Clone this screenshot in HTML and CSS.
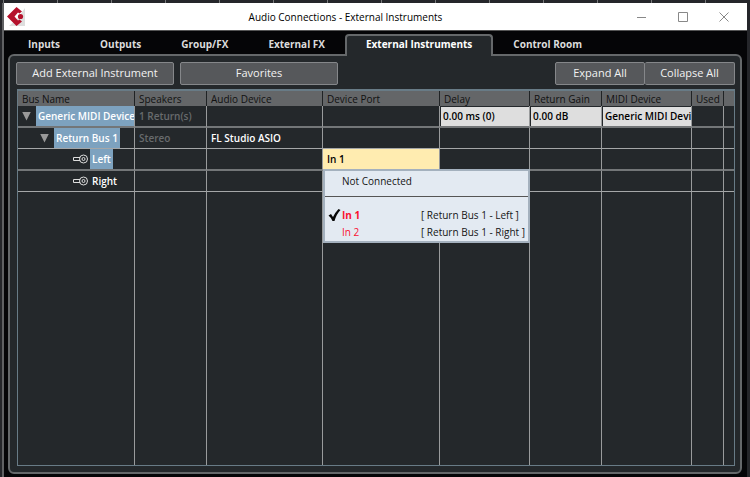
FILE: index.html
```html
<!DOCTYPE html>
<html lang="en">
<head>
  <meta charset="UTF-8" />
  <meta name="viewport" content="width=device-width, initial-scale=1.0" />
  <title>Audio Connections - External Instruments</title>
  <link rel="stylesheet" href="styles.css">
</head>
<body>
  <div class="window">
    <header class="titlebar">
      <svg class="logo" viewBox="0 0 19 19" aria-hidden="true">
        <path d="M18 1V19H2L10 12Z" fill="#dedede"/>
        <path d="M9.500 0L15 4.500L12.500 6.500L11 5.500L7.500 9.500L11 13.500L12.500 12.500L15 14.500L9.500 19L0 9.500Z" fill="#b5122c"/>
        <circle cx="13.500" cy="9.500" r="2.600" fill="#b5122c"/>
      </svg>
      <h1>Audio Connections - External Instruments</h1>
      <div class="window-buttons">
        <button aria-label="Minimize"><svg viewBox="0 0 10 10"><path d="M0 5.500H9"/></svg></button>
        <button aria-label="Maximize"><svg viewBox="0 0 10 10"><path d="M.5 .5H9.500V9.500H.5Z"/></svg></button>
        <button aria-label="Close"><svg viewBox="0 0 10 10"><path d="M.5 .5L9.500 9.500M9.500 .5L.5 9.500"/></svg></button>
      </div>
    </header>

    <nav class="tabs" role="tablist">
      <button class="tab" role="tab">Inputs</button>
      <button class="tab" role="tab">Outputs</button>
      <button class="tab" role="tab">Group/FX</button>
      <button class="tab" role="tab">External FX</button>
      <button class="tab active" role="tab" aria-selected="true">External Instruments</button>
      <button class="tab" role="tab">Control Room</button>
    </nav>

    <main class="panel">
      <div class="toolbar">
        <button class="button wide">Add External Instrument</button>
        <button class="button wide">Favorites</button>
        <div class="button-group">
          <button class="button">Expand All</button>
          <button class="button">Collapse All</button>
        </div>
      </div>

      <div class="bus-list">
        <table>
          <colgroup>
            <col class="col-bus"><col class="col-speakers"><col class="col-audio">
            <col class="col-port"><col class="col-delay"><col class="col-gain">
            <col class="col-midi"><col class="col-used"><col>
          </colgroup>
          <thead>
            <tr>
              <th>Bus Name</th><th>Speakers</th><th>Audio Device</th><th>Device Port</th>
              <th>Delay</th><th>Return Gain</th><th>MIDI Device</th><th>Used</th><th></th>
            </tr>
          </thead>
          <tbody>
            <tr>
              <td><div class="bus"><button class="arrow" aria-label="Collapse"></button><span class="name selected">Generic MIDI Device</span></div></td>
              <td class="dim">1 Return(s)</td><td></td><td></td>
              <td class="field"><input type="text" value="0.00 ms (0)" aria-label="Delay"></td>
              <td class="field"><input type="text" value="0.00 dB" aria-label="Return Gain"></td>
              <td class="field"><select aria-label="MIDI Device"><option>Generic MIDI Device</option></select></td>
              <td></td><td></td>
            </tr>
            <tr>
              <td><div class="bus level-1"><button class="arrow" aria-label="Collapse"></button><span class="name selected">Return Bus 1</span></div></td>
              <td class="dim">Stereo</td><td>FL Studio ASIO</td><td></td>
              <td></td><td></td><td></td><td></td><td></td>
            </tr>
            <tr>
              <td><div class="bus level-2">
                <svg class="plug" viewBox="0 0 15 10"><path d="M7 3.500H.5V6.500H7"/><circle cx="10.500" cy="5" r="4"/><circle cx="10.500" cy="5" r="1.500"/></svg>
                <span class="name selected">Left</span></div></td>
              <td></td><td></td>
              <td class="port">
                <button class="port-button" aria-haspopup="menu" aria-expanded="true">In 1</button>
                <div class="menu" role="menu">
                  <button class="menu-item" role="menuitem"><span>Not Connected</span></button>
                  <hr>
                  <button class="menu-item used checked" role="menuitem">
                    <svg class="check" viewBox="0 0 12 12"><path d="M0 6.500L2.500 5L4.500 8Q7 3 10 0L12 1Q8 5 6 12L4 12Q3 9 0 6.500Z"/></svg>
                    <span>In 1</span><span class="bus-ref">[ Return Bus 1 - Left ]</span>
                  </button>
                  <button class="menu-item used" role="menuitem"><span>In 2</span><span class="bus-ref">[ Return Bus 1 - Right ]</span></button>
                </div>
              </td>
              <td></td><td></td><td></td><td></td><td></td>
            </tr>
            <tr>
              <td><div class="bus level-2">
                <svg class="plug" viewBox="0 0 15 10"><path d="M7 3.500H.5V6.500H7"/><circle cx="10.500" cy="5" r="4"/><circle cx="10.500" cy="5" r="1.500"/></svg>
                <span class="name">Right</span></div></td>
              <td></td><td></td><td></td><td></td><td></td><td></td><td></td><td></td>
            </tr>
            <tr class="filler">
              <td></td><td></td><td></td><td></td><td></td><td></td><td></td><td></td><td></td>
            </tr>
          </tbody>
        </table>
      </div>
    </main>
  </div>
</body>
</html>
```

FILE: styles.css
```css
* {
  box-sizing: border-box;
}
body {
  margin: 0;
  height: 100vh;
  padding: 3px 3px 0 2px;
  background: repeating-linear-gradient(to right, #25262a 0 3px, #77787a 3px 4px, #25262a 4px 54px);
  font-family: "Open Sans", "Noto Sans", sans-serif;
  font-size: 10px;
  line-height: 16px;
}
button, input, select {
  margin: 0;
  padding: 0;
  border: none;
  background: none;
  color: inherit;
  font: inherit;
}
.window {
  height: 100%;
  display: flex;
  flex-direction: column;
  background: #050507;
  border-left: 2px solid #606163;
}

/* title bar */
.titlebar {
  height: 28px;
  flex: none;
  display: flex;
  align-items: center;
  padding: 0 3px;
  background: #fff;
  border-bottom: 1px solid #555;
}
.logo {
  width: 19px;
  height: 19px;
}
.titlebar h1 {
  flex: 1;
  margin: 0;
  padding-left: 44px;
  text-align: center;
  font-size: 10px;
  font-weight: 400;
  color: #000;
}
.window-buttons {
  display: flex;
}
.window-buttons button {
  width: 41px;
  height: 26px;
  display: flex;
  align-items: center;
  justify-content: center;
}
.window-buttons svg {
  width: 10px;
  height: 10px;
  fill: none;
  stroke: #888;
}

/* tabs */
.tabs {
  display: flex;
  flex: none;
  height: 22px;
  margin: 3px 5px -2px 4px;
  position: relative;
}
.tab {
  padding: 0 20px 2px;
  font-weight: 700;
  color: #dcdcdc;
}
.tab.active {
  padding: 0 19px 4px;
  background: #24282b;
  border: 2px solid #65686a;
  border-bottom: none;
  border-radius: 4px 4px 0 0;
  color: #fff;
}

/* panel */
.panel {
  flex: 1;
  min-height: 0;
  display: flex;
  flex-direction: column;
  margin: 0 5px 3px 4px;
  padding: 6px 5px 6px 6px;
  background: #24282b;
  border: 2px solid #65686a;
  border-radius: 6px;
}
.toolbar {
  display: flex;
  gap: 6px;
  margin-bottom: 4px;
}
.button {
  height: 23px;
  width: 90px;
  padding-bottom: 1px;
  background: #56585b;
  border: 1px solid #85878a;
  border-radius: 2px;
  font-size: 11px;
  color: #f2f2f2;
}
.button.wide {
  width: 158px;
}
.button-group {
  display: flex;
  margin-left: auto;
}
.button-group .button + .button {
  border-left: none;
}

/* bus list */
.bus-list {
  flex: 1;
  min-height: 0;
  display: flex;
  margin-left: 1px;
  border: 1px solid #687b86;
  border-top-width: 2px;
}
table {
  width: 100%;
  table-layout: fixed;
  border-collapse: separate;
  border-spacing: 0;
}
.col-bus, .col-port { width: 117px; }
.col-audio { width: 116px; }
.col-speakers, .col-gain { width: 72px; }
.col-delay, .col-midi { width: 90px; }
.col-used { width: 32px; }
th {
  height: 15px;
  padding: 0 4px;
  background: #646668;
  border-right: 1px solid #202325;
  text-align: left;
  line-height: 14px;
  font-weight: 400;
  color: #111;
  white-space: nowrap;
}
td {
  height: 21px;
  padding: 0 4px;
  border-right: 1px solid #999b9c;
  border-bottom: 1px solid #a5a7a8;
  font-weight: 600;
  color: #fff;
  white-space: nowrap;
}
tr:nth-child(odd) td {
  height: 22px;
  border-bottom: 2px solid #737678;
}
th:last-child, td:last-child {
  border-right: none;
}
tbody .filler td {
  height: auto;
  border-bottom: none;
}
td.dim {
  color: #686b6d;
}
td:first-child {
  padding: 0;
  overflow: hidden;
}
.bus {
  display: flex;
  align-items: center;
  height: 20px;
  padding-left: 4px;
}
.level-1 { padding-left: 22px; }
.level-2 { padding-left: 55px; }
.arrow {
  width: 9px;
  height: 9px;
  margin-right: 5px;
  background: #999;
  clip-path: polygon(0 0, 100% 0, 50% 100%);
  flex: none;
}
.name {
  padding: 0 2px;
  line-height: 20px;
}
.selected {
  background: #7da2bf;
}
.plug {
  width: 15px;
  height: 10px;
  margin-right: 2px;
  fill: none;
  stroke: #ddd;
}
td.field {
  padding: 0 0 0 1px;
}
.field input, .field select {
  display: block;
  width: 100%;
  height: 19px;
  padding: 0 0 0 2px;
  background: #dedede;
  border-radius: 0;
  color: #000;
  appearance: none;
  text-overflow: clip;
}
td.port {
  position: relative;
  padding: 0;
}
.port-button {
  display: block;
  width: 100%;
  height: 20px;
  padding: 0 4px;
  background: #ffecb0;
  color: #000;
  text-align: left;
}

/* port menu */
.menu {
  position: absolute;
  z-index: 1;
  top: 100%;
  left: 0;
  width: 207px;
  padding: 1px 0;
  background: #e3eaf2;
  border: 2px solid #a4b1be;
  font-weight: 400;
}
.menu hr {
  margin: 7px 0 9px;
  border: none;
  border-top: 1px solid #555;
}
.menu-item {
  display: flex;
  align-items: center;
  width: 100%;
  height: 17px;
  padding-left: 17px;
  color: #151515;
  position: relative;
}
.used span:first-of-type {
  width: 79px;
  text-align: left;
  color: #fa1030;
}
.checked span:first-of-type {
  font-weight: 700;
}
.check {
  position: absolute;
  left: 3px;
  width: 13px;
  height: 12px;
  fill: #080808;
}
```
